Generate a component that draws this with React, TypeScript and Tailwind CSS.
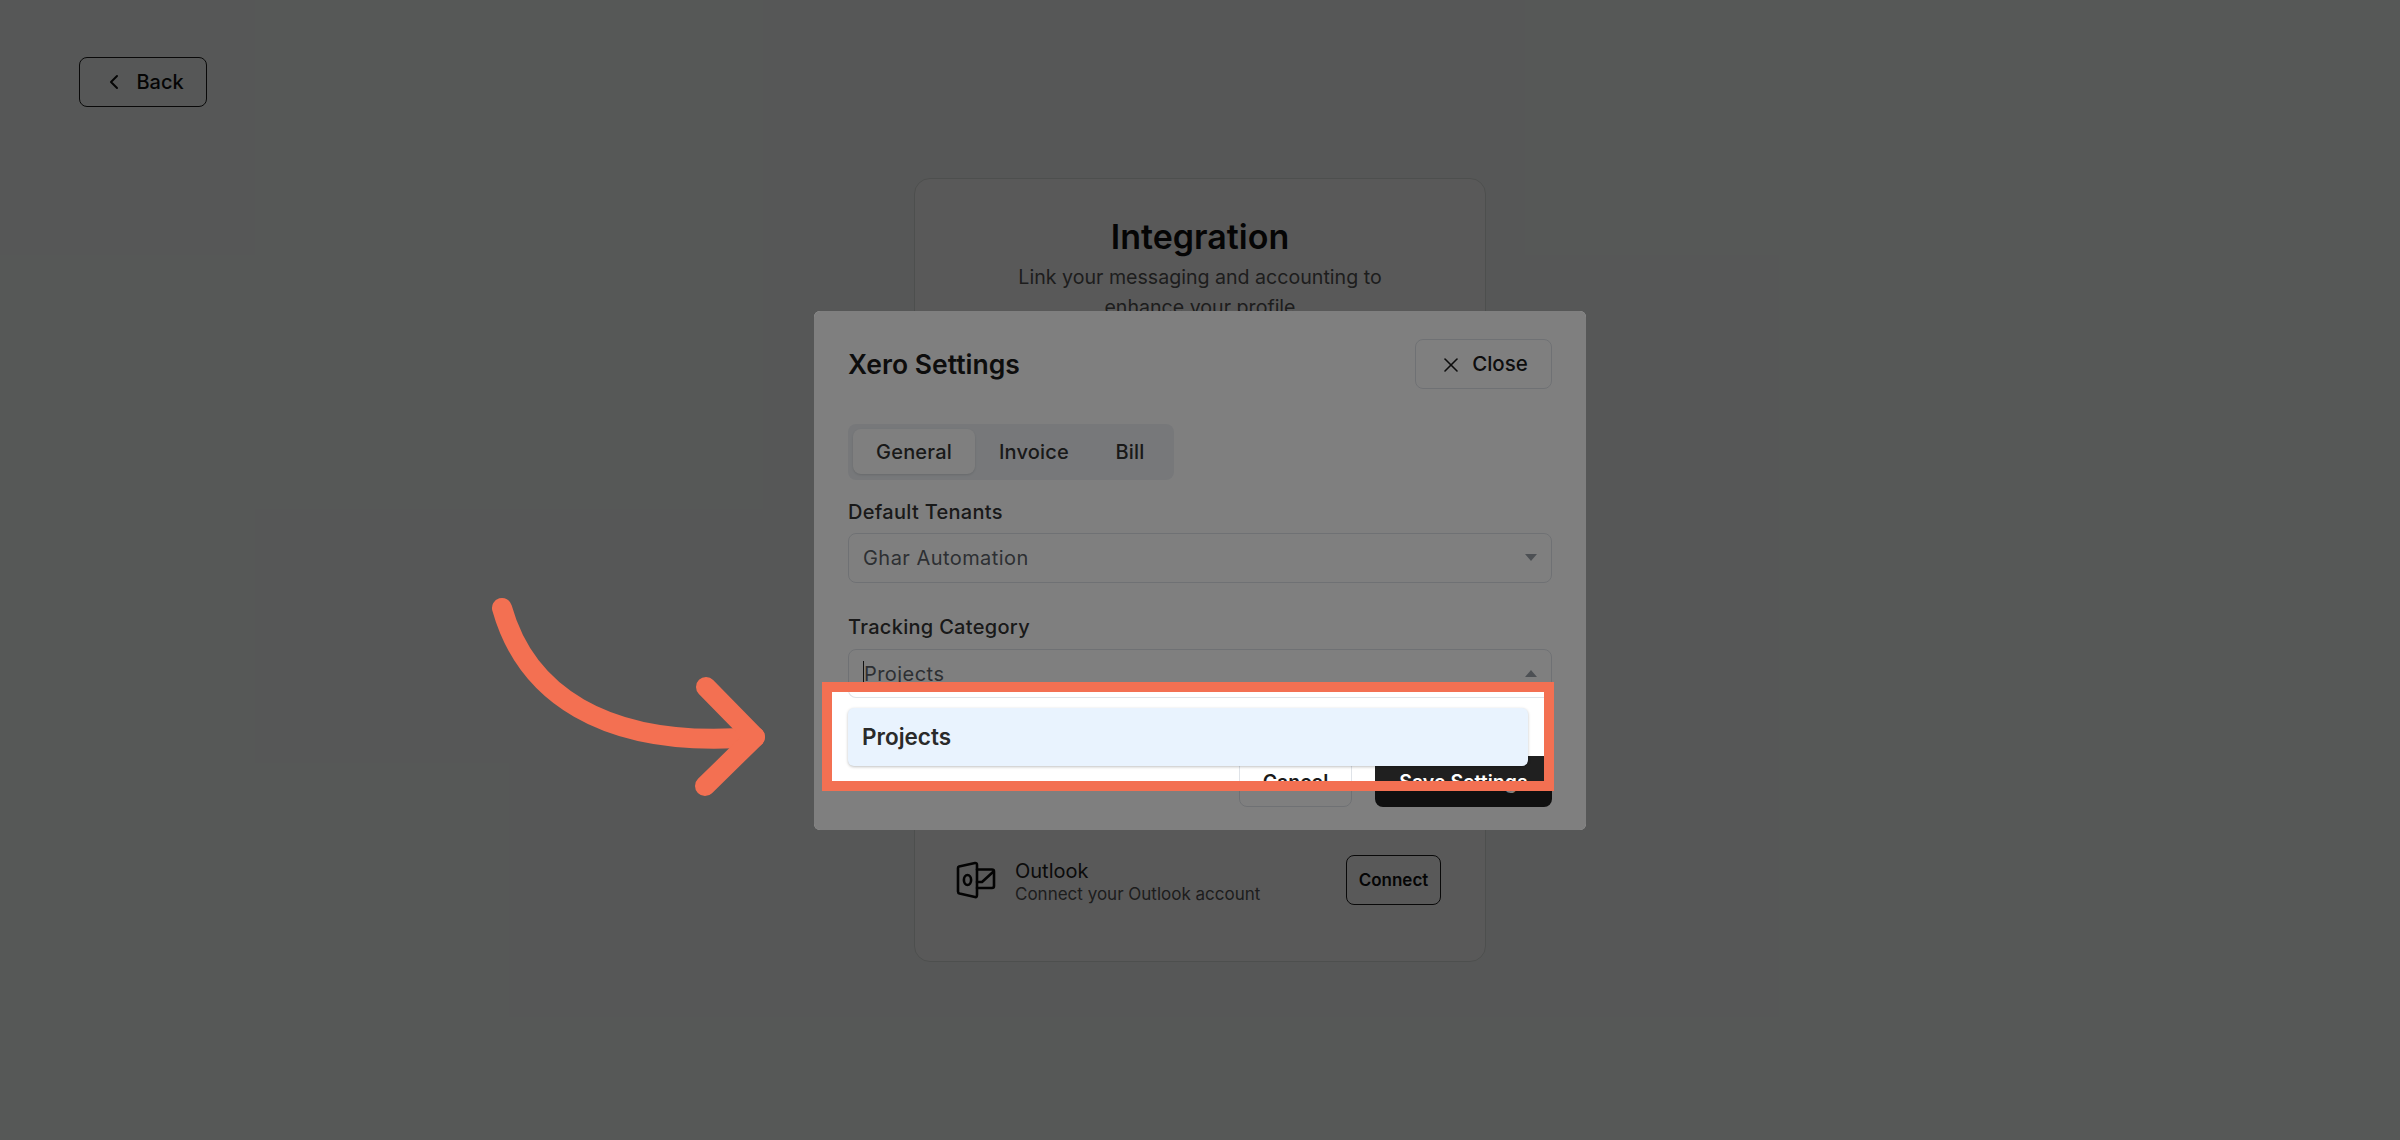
import React from "react";
import { ChevronLeft, X } from "lucide-react";

const font = "font-['Inter','Liberation_Sans',sans-serif]";

function OutlookIcon() {
  return (
    <svg width="40" height="40" viewBox="0 0 40 40" fill="none" stroke="#0b0b0b" strokeWidth="2.6" strokeLinejoin="round" strokeLinecap="round">
      <path d="M3 6.5 L19 3 Q21 2.8 21 5 L21 35 Q21 37.5 19 37 L3.5 33.5 Q2 33 2 31.5 L2 8 Q2 6.8 3 6.5 Z" />
      <ellipse cx="11.5" cy="20" rx="3.6" ry="5" />
      <path d="M21 9.5 L36 9.5 Q38 9.5 38 11.5 L38 26 Q38 28 36 28 L21 28" />
      <path d="M21 22 L26 22 L37 12" />
    </svg>
  );
}

function Caret({ up }: { up?: boolean }) {
  return (
    <svg width="12" height="7" viewBox="0 0 12 7" className="shrink-0">
      <path d={up ? "M6 0 L12 7 L0 7 Z" : "M0 0 L12 0 L6 7 Z"} fill="#9aa1a9" />
    </svg>
  );
}

function SelectBox({ children, up }: { children: React.ReactNode; up?: boolean }) {
  return (
    <div className="flex h-[50px] items-center justify-between rounded-lg border border-[#dfe3e8] bg-white pl-[14px] pr-[14px] text-[20px] tracking-[0.45px] text-[#5a5f66]">
      {children}
      <Caret up={up} />
    </div>
  );
}

function Actions() {
  return (
    <div className="flex justify-end gap-[23px]">
      <button className="h-[51px] w-[113px] rounded-lg border border-[#dfe3e8] bg-white pt-[3px] text-[19.5px] font-semibold text-[#1a1a1a]">
        Cancel
      </button>
      <button className="h-[51px] w-[177px] rounded-lg bg-[#202020] pt-[3px] text-[19.5px] font-semibold text-white">
        Save Settings
      </button>
    </div>
  );
}

export default function App() {
  return (
    <div className={`relative h-[1140px] w-full overflow-hidden bg-[#f5faf8] ${font}`}>
      {/* page behind the dialog */}
      <div className="flex h-full flex-col px-[79px] pt-[57px]">
        <button className="flex h-[50px] w-[128px] items-center justify-center gap-[10px] rounded-lg border-[1.5px] border-[#1c1c1c] text-[20px] font-medium text-[#111]">
          <ChevronLeft size={24} strokeWidth={2} />
          Back
        </button>
        <div className="mx-auto mt-[71px] flex h-[784px] w-[572px] flex-col rounded-2xl border border-[#dde1df] bg-white pl-[41px] pr-[44px] pt-[36px] pb-[56px]">
          <h1 className="pl-[3px] text-center text-[34px] leading-[44px] font-semibold text-[#111]">Integration</h1>
          <p className="mx-auto mt-[3px] w-[420px] pl-[3px] text-center text-[19.6px] leading-[30px] text-[#555]">
            Link your messaging and accounting to enhance your profile
          </p>
          <div className="mt-auto flex items-center">
            <OutlookIcon />
            <div className="ml-[19px] flex-1 pt-[4px]">
              <div className="text-[20px] leading-[23px] text-[#222]">Outlook</div>
              <div className="text-[17px] leading-[22px] text-[#555]">Connect your Outlook account</div>
            </div>
            <button className="h-[50px] w-[95px] rounded-lg border-[1.5px] border-[#1c1c1c] pt-[2px] text-[17px] font-semibold text-[#111]">
              Connect
            </button>
          </div>
        </div>
      </div>

      {/* page dim */}
      <div className="absolute inset-0 bg-black/65" />

      {/* dialog */}
      <div className="absolute inset-0 flex items-center justify-center">
        <div className="relative h-[519px] w-[772px] rounded-md bg-white">
          <div className="flex h-full flex-col px-[34px] pt-[28px] pb-[23px]">
            <div className="flex items-center justify-between">
              <h2 className="pt-[2px] text-[26.5px] font-semibold text-[#1a1a1a]">Xero Settings</h2>
              <button className="flex h-[50px] w-[137px] items-center justify-center gap-[9px] rounded-lg border border-[#dfe3e8] pt-[2px] text-[20.5px] font-medium text-[#1a1a1a]">
                <X size={24} strokeWidth={1.6} />
                Close
              </button>
            </div>
            <div className="mt-[35px] flex h-[56px] w-[326px] items-center rounded-lg bg-[#eef1f5] px-[5px] text-[20px] tracking-[0.2px] font-medium text-[#333]">
              <div className="flex h-[45px] w-[122px] items-center justify-center rounded-lg bg-white shadow-sm">General</div>
              <div className="flex w-[118px] justify-center">Invoice</div>
              <div className="flex w-[74px] justify-center">Bill</div>
            </div>
            <label className="mt-[21px] mb-[10px] text-[20px] tracking-[0.3px] leading-[22px] font-medium text-[#333]">Default Tenants</label>
            <SelectBox>Ghar Automation</SelectBox>
            <label className="mt-[33px] mb-[11px] text-[20px] tracking-[0.3px] leading-[22px] font-medium text-[#333]">Tracking Category</label>
            <SelectBox up>
              <span className="border-l border-[#222] leading-[26px]">Projects</span>
            </SelectBox>
            <div className="mt-auto">
              <Actions />
            </div>
          </div>

          <div className="absolute inset-0 rounded-md bg-black/50" />

          {/* highlighted window on the open dropdown */}
          <div className="absolute top-[371px] left-[8px] h-[109px] w-[732px] overflow-hidden border-[10px] border-[#f37052] bg-white">
            <div className="absolute top-[-8px] left-[16px] h-[14px] w-[704px] rounded-b-lg border border-t-0 border-[#dfe3e8]" />
            <div className="absolute top-[64px] right-[-8px]">
              <Actions />
            </div>
            <div className="absolute top-[16px] left-[16px] flex h-[58px] w-[680px] items-center rounded-md bg-[#e9f3fe] pt-[1px] pl-[14px] text-[22.5px] font-semibold text-[#2a2a2a] shadow-[0_1px_3px_rgba(0,0,0,0.25)]">
              Projects
            </div>
          </div>
        </div>
      </div>

      {/* arrow pointing at the dropdown */}
      <svg className="absolute top-[580px] left-[460px]" width="340" height="230" viewBox="0 0 340 230" fill="none" stroke="#f37052" strokeWidth="20" strokeLinecap="round" strokeLinejoin="round">
        <path d="M42 28 C65 110 140 170 295 157" />
        <path d="M246 107 L295 157 L245 206" />
      </svg>
    </div>
  );
}
